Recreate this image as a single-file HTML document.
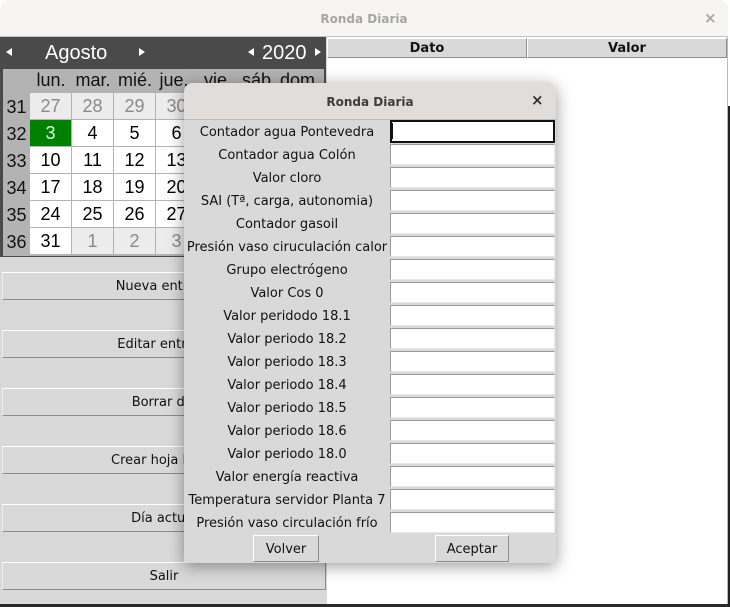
<!DOCTYPE html>
<html><head><meta charset="utf-8"><style>
html,body{margin:0;padding:0;background:#fff}
#r{position:relative;width:730px;height:607px;overflow:hidden;background:#fff;font-family:"DejaVu Sans",sans-serif;color:#111;filter:blur(.35px)}
#r div{position:absolute;box-sizing:border-box;white-space:nowrap}
.c{text-align:center;font:18px/27px "Liberation Sans",sans-serif;width:41px;height:26px;background:#fff;color:#000}
.g{background:#ececec;color:#8a8a8a}
.w{left:3px;width:27px;height:27px;text-align:center;font:18px/29px "Liberation Sans",sans-serif;color:#111}
.d{top:69px;width:42px;height:23px;text-align:center;font:18px/22px "Liberation Sans",sans-serif;color:#111}
.b{left:2px;width:324px;height:28px;background:#d9d9d9;border-top:1px solid #fff;border-left:1px solid #eee;border-bottom:1px solid #8c8c8c;border-right:1px solid #8c8c8c;text-align:center;font-size:13px;line-height:28px}
.l{left:184px;width:206px;height:23px;text-align:center;font-size:13px;line-height:26px;color:#111}
.e{left:390px;width:165px;height:21px;background:#fff;border-top:1px solid #9a9a9a;border-left:1px solid #9a9a9a;border-right:1px solid #e8e8e8;border-bottom:1px solid #e8e8e8}
.h{top:38px;height:20px;background:#d9d9d9;border:1px solid #8e8e8e;border-top-color:#fff;border-left-color:#fff;text-align:center;font-weight:bold;font-size:13px;line-height:19px}
.t{width:0;height:0;border-top:4px solid transparent;border-bottom:4px solid transparent}
.tl{border-right:6px solid #fff}.tr{border-left:6px solid #fff}
.db{top:535px;height:27px;background:#d9d9d9;border:1px solid #8c8c8c;border-top-color:#fff;border-left-color:#fff;text-align:center;font-size:13px;line-height:27px}
</style></head><body><div id="r">
<div style="left:0;top:604px;width:730px;height:3px;background:#2a2a2a"></div>
<div style="left:728px;top:106px;width:2px;height:501px;background:#222"></div>
<div style="left:0;top:0;width:728px;height:604px;background:#fff;border-radius:10px 10px 0 0;border-right:1px solid #bbb"></div>
<div style="left:0;top:0;width:728px;height:37px;background:#f6f5f4;border-radius:10px 10px 0 0;border-bottom:1px solid #c4c2bf;text-align:center;font-weight:bold;font-size:12px;line-height:39px;color:#a6a6a6">Ronda Diaria</div>
<div style="left:704px;top:10px;font-size:15px;line-height:17px;color:#a6a6a6;font-weight:bold">×</div>
<div style="left:0;top:37px;width:327px;height:567px;background:#d9d9d9"></div>

<div style="left:0;top:37px;width:326px;height:32px;background:#4a4a4a"></div>
<div style="left:0;top:69px;width:326px;height:188px;background:#4a4a4a"></div>
<div style="left:3px;top:69px;width:321px;height:187px;background:#b3b3b3"></div>
<div class="t tl" style="left:6px;top:48px"></div>
<div class="t tr" style="left:139px;top:48px"></div>
<div class="t tl" style="left:248px;top:48px"></div>
<div class="t tr" style="left:315px;top:48px"></div>
<div style="left:45px;top:39px;font:20px/28px 'Liberation Sans',sans-serif;color:#fff">Agosto</div>
<div style="left:262px;top:39px;font:20px/28px 'Liberation Sans',sans-serif;color:#fff">2020</div>

<div class="d" style="left:30px">lun.</div><div class="d" style="left:72px">mar.</div><div class="d" style="left:114px">mié.</div><div class="d" style="left:153px">jue.</div><div class="d" style="left:197px">vie.</div><div class="d" style="left:238px">sáb.</div><div class="d" style="left:279px">dom.</div>

<div class="w" style="top:93px">31</div><div class="w" style="top:120px">32</div><div class="w" style="top:147px">33</div><div class="w" style="top:174px">34</div><div class="w" style="top:201px">35</div><div class="w" style="top:228px">36</div>

<div class="c g" style="left:30px;top:93px">27</div><div class="c g" style="left:72px;top:93px">28</div><div class="c g" style="left:114px;top:93px">29</div><div class="c g" style="left:156px;top:93px">30</div>
<div class="c" style="left:30px;top:120px;background:#008000;color:#dfe">3</div><div class="c" style="left:72px;top:120px">4</div><div class="c" style="left:114px;top:120px">5</div><div class="c" style="left:156px;top:120px">6</div>
<div class="c" style="left:30px;top:147px">10</div><div class="c" style="left:72px;top:147px">11</div><div class="c" style="left:114px;top:147px">12</div><div class="c" style="left:156px;top:147px">13</div>
<div class="c" style="left:30px;top:174px">17</div><div class="c" style="left:72px;top:174px">18</div><div class="c" style="left:114px;top:174px">19</div><div class="c" style="left:156px;top:174px">20</div>
<div class="c" style="left:30px;top:201px">24</div><div class="c" style="left:72px;top:201px">25</div><div class="c" style="left:114px;top:201px">26</div><div class="c" style="left:156px;top:201px">27</div>
<div class="c" style="left:30px;top:228px">31</div><div class="c g" style="left:72px;top:228px">1</div><div class="c g" style="left:114px;top:228px">2</div><div class="c g" style="left:156px;top:228px">3</div>

<div class="b" style="top:272px">Nueva entrada</div>
<div class="b" style="top:330px">Editar entrada</div>
<div class="b" style="top:388px">Borrar día</div>
<div class="b" style="top:446px">Crear hoja Excel</div>
<div class="b" style="top:504px">Día actual</div>
<div class="b" style="top:562px">Salir</div>

<div class="h" style="left:327px;width:200px">Dato</div>
<div class="h" style="left:527px;width:200px">Valor</div>

<div style="left:184px;top:83px;width:372px;height:480px;background:#d9d9d9;border-radius:9px 9px 0 0;box-shadow:0 3px 16px rgba(0,0,0,.4)"></div>
<div style="left:184px;top:83px;width:372px;height:37px;background:#e0dddb;border-radius:9px 9px 0 0;border-bottom:1px solid #bdbab6;text-align:center;font-weight:bold;font-size:12px;line-height:39px;color:#3d3d3d">Ronda Diaria</div>
<div style="left:531px;top:92px;font-size:15px;line-height:17px;font-weight:bold;color:#333">×</div>

<div class="l" style="top:120px">Contador agua Pontevedra</div>
<div class="l" style="top:143px">Contador agua Colón</div>
<div class="l" style="top:166px">Valor cloro</div>
<div class="l" style="top:189px">SAI (Tª, carga, autonomia)</div>
<div class="l" style="top:212px">Contador gasoil</div>
<div class="l" style="top:235px">Presión vaso ciruculación calor</div>
<div class="l" style="top:258px">Grupo electrógeno</div>
<div class="l" style="top:281px">Valor Cos 0</div>
<div class="l" style="top:304px">Valor peridodo 18.1</div>
<div class="l" style="top:327px">Valor periodo 18.2</div>
<div class="l" style="top:350px">Valor periodo 18.3</div>
<div class="l" style="top:373px">Valor periodo 18.4</div>
<div class="l" style="top:396px">Valor periodo 18.5</div>
<div class="l" style="top:419px">Valor periodo 18.6</div>
<div class="l" style="top:442px">Valor periodo 18.0</div>
<div class="l" style="top:465px">Valor energía reactiva</div>
<div class="l" style="top:488px">Temperatura servidor Planta 7</div>
<div class="l" style="top:511px">Presión vaso circulación frío</div>

<div class="e" style="top:120px;height:23px;border:2px solid #111"></div>
<div style="left:391px;top:123px;width:2px;height:16px;background:#111"></div>
<div class="e" style="top:144px"></div><div class="e" style="top:167px"></div><div class="e" style="top:190px"></div><div class="e" style="top:213px"></div><div class="e" style="top:236px"></div><div class="e" style="top:259px"></div><div class="e" style="top:282px"></div><div class="e" style="top:305px"></div><div class="e" style="top:328px"></div><div class="e" style="top:351px"></div><div class="e" style="top:374px"></div><div class="e" style="top:397px"></div><div class="e" style="top:420px"></div><div class="e" style="top:443px"></div><div class="e" style="top:466px"></div><div class="e" style="top:489px"></div><div class="e" style="top:512px"></div>

<div class="db" style="left:253px;width:66px">Volver</div>
<div class="db" style="left:435px;width:74px">Aceptar</div>
</div></body></html>
